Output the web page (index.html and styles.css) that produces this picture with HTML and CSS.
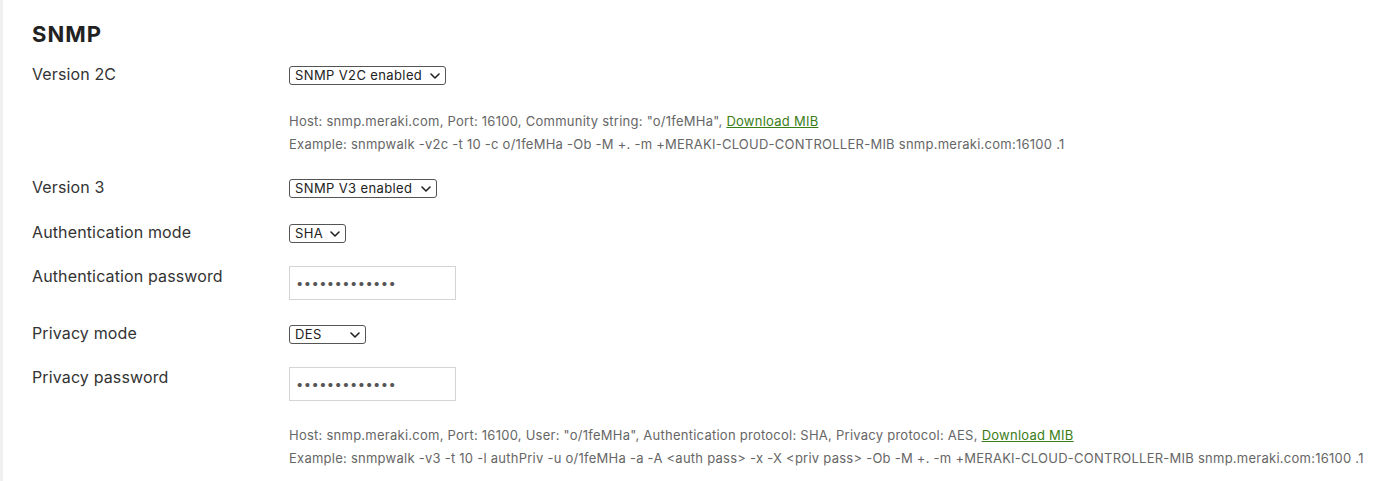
FILE: index.html
```html
<!DOCTYPE html>
<html lang="en">
<head>
<meta charset="utf-8">
<title>SNMP</title>
<link rel="stylesheet" href="styles.css">
</head>
<body>
<main class="page">
  <section class="snmp">
    <h2 class="title">SNMP</h2>
    <div class="form">
      <label class="label" for="v2c">Version 2C</label>
      <div class="control">
        <span class="select-wrap">
          <select id="v2c" class="select w-v2c"><option>SNMP V2C enabled</option><option>SNMP V2C disabled</option></select>
          <svg class="chev" viewBox="0 0 10 6" width="10" height="6" aria-hidden="true"><path d="M1 1l4 4 4-4" fill="none" stroke="#222" stroke-width="1.6" stroke-linecap="round" stroke-linejoin="round"/></svg>
        </span>
      </div>

      <div class="help help-first">
        <p>Host: snmp.meraki.com, Port: 16100, Community string: "o/1feMHa", <a href="#">Download MIB</a></p>
        <p>Example: snmpwalk -v2c -t 10 -c o/1feMHa -Ob -M +. -m +MERAKI-CLOUD-CONTROLLER-MIB snmp.meraki.com:16100 .1</p>
      </div>

      <label class="label" for="v3">Version 3</label>
      <div class="control">
        <span class="select-wrap">
          <select id="v3" class="select w-v3"><option>SNMP V3 enabled</option><option>SNMP V3 disabled</option></select>
          <svg class="chev" viewBox="0 0 10 6" width="10" height="6" aria-hidden="true"><path d="M1 1l4 4 4-4" fill="none" stroke="#222" stroke-width="1.6" stroke-linecap="round" stroke-linejoin="round"/></svg>
        </span>
      </div>

      <label class="label shift" for="authmode">Authentication mode</label>
      <div class="control shift">
        <span class="select-wrap">
          <select id="authmode" class="select w-sha"><option>SHA</option><option>MD5</option></select>
          <svg class="chev" viewBox="0 0 10 6" width="10" height="6" aria-hidden="true"><path d="M1 1l4 4 4-4" fill="none" stroke="#222" stroke-width="1.6" stroke-linecap="round" stroke-linejoin="round"/></svg>
        </span>
      </div>

      <label class="label" for="authpass">Authentication password</label>
      <div class="control">
        <input id="authpass" class="input" type="password" value="abcdefghijklm">
      </div>

      <label class="label" for="privmode">Privacy mode</label>
      <div class="control">
        <span class="select-wrap">
          <select id="privmode" class="select w-des"><option>DES</option><option>AES128</option></select>
          <svg class="chev" viewBox="0 0 10 6" width="10" height="6" aria-hidden="true"><path d="M1 1l4 4 4-4" fill="none" stroke="#222" stroke-width="1.6" stroke-linecap="round" stroke-linejoin="round"/></svg>
        </span>
      </div>

      <label class="label" for="privpass">Privacy password</label>
      <div class="control">
        <input id="privpass" class="input" type="password" value="abcdefghijklm">
      </div>

      <div class="help">
        <p>Host: snmp.meraki.com, Port: 16100, User: "o/1feMHa", Authentication protocol: SHA, Privacy protocol: AES, <a href="#">Download MIB</a></p>
        <p>Example: snmpwalk -v3 -t 10 -l authPriv -u o/1feMHa -a -A &lt;auth pass&gt; -x -X &lt;priv pass&gt; -Ob -M +. -m +MERAKI-CLOUD-CONTROLLER-MIB snmp.meraki.com:16100 .1</p>
      </div>
    </div>
  </section>
</main>
</body>
</html>
```

FILE: styles.css
```css
* { box-sizing: border-box; }

html, body {
  margin: 0;
  padding: 0;
  background: #ffffff;
}

body {
  font-family: Inter, "Noto Sans", "Liberation Sans", sans-serif;
  color: #333333;
}

.page {
  min-height: 481px;
  border-left: 3px solid #f0f0f0;
  padding: 20px 0 0 29px;
}

.title {
  margin: 0;
  font-size: 22px;
  line-height: 28px;
  font-weight: 700;
  letter-spacing: 1px;
  color: #222222;
}

.form {
  margin-top: 16px;
  display: grid;
  grid-template-columns: 257px 1fr;
  row-gap: 23px;
  align-items: start;
}

.label {
  font-size: 16px;
  line-height: 20px;
  letter-spacing: 0.13px;
  color: #333333;
}

.shift {
  margin-top: 1px;
}

.control {
  display: flex;
  align-items: flex-start;
}

.select-wrap {
  position: relative;
  display: inline-block;
  margin-top: 2px;
}

.select {
  appearance: none;
  -webkit-appearance: none;
  display: block;
  height: 19px;
  margin: 0;
  padding: 0 20px 0 5px;
  border: 1px solid #555555;
  border-radius: 3px;
  background: #ffffff;
  font-family: Inter, "Noto Sans", "Liberation Sans", sans-serif;
  font-size: 13px;
  line-height: 17px;
  letter-spacing: 0.38px;
  color: #222222;
}

.w-v2c { width: 157px; }
.w-v3 { width: 148px; }
.w-sha { width: 57px; }
.w-des { width: 77px; }

.chev {
  position: absolute;
  right: 6px;
  top: 7px;
  pointer-events: none;
}

.input {
  width: 167px;
  height: 34px;
  margin: 0;
  padding: 0 6px;
  border: 1px solid #d4d4d4;
  border-radius: 0;
  background: #ffffff;
  font-family: Inter, "Noto Sans", "Liberation Sans", sans-serif;
  font-size: 13px;
  color: #555555;
  letter-spacing: 0.4px;
}

.help {
  grid-column: 2;
  font-size: 13px;
  line-height: 23px;
  letter-spacing: 0.25px;
  color: #666666;
}

.help-first {
  margin-top: 2px;
  margin-bottom: -2px;
}

.help p {
  margin: 0;
  white-space: nowrap;
}

.help a {
  color: #3b7d17;
  text-decoration: underline;
}
```
